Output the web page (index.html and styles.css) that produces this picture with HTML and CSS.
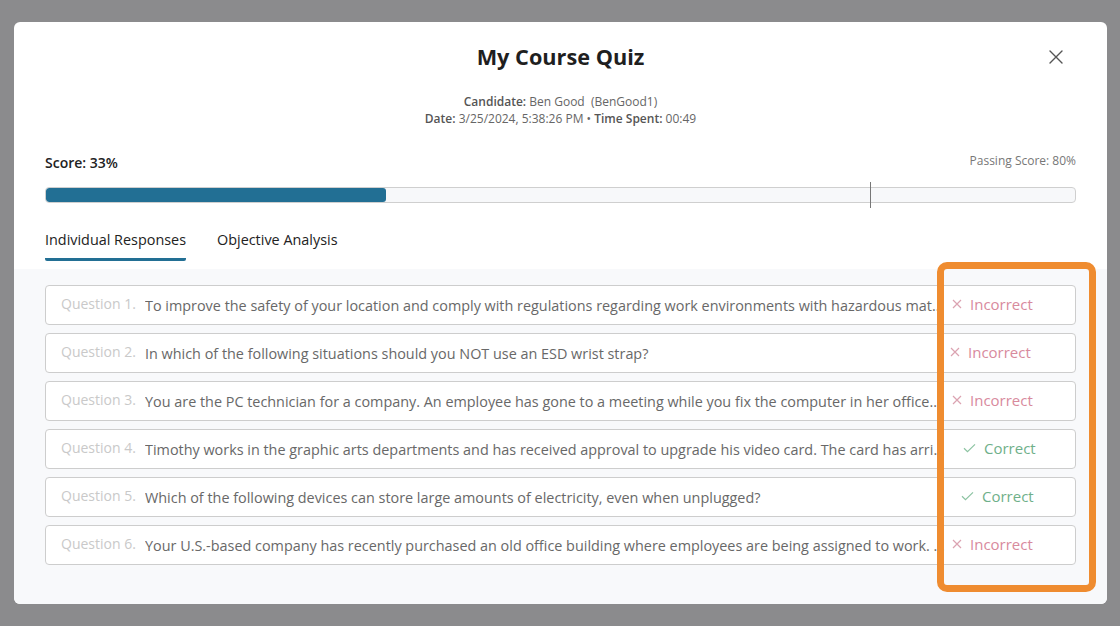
FILE: index.html
```html
<!DOCTYPE html>
<html>
<head>
<meta charset="utf-8">
<link rel="stylesheet" href="styles.css">
</head>
<body>
<div class="modal">
  <header class="head">
    <h1 class="title">My Course Quiz</h1>
    <button class="close" aria-label="Close">
      <svg width="16" height="16" viewBox="0 0 16 16"><path d="M2 2L14 14M14 2L2 14" stroke="#555" stroke-width="1.4" fill="none" stroke-linecap="round"/></svg>
    </button>
  </header>
  <div class="meta">
    <div><b>Candidate:</b> Ben Good&nbsp; (BenGood1)</div>
    <div><b>Date:</b> 3/25/2024, 5:38:26 PM • <b>Time Spent:</b> 00:49</div>
  </div>
  <div class="score-row">
    <div class="score">Score: 33%</div>
    <div class="passing">Passing Score: 80%</div>
  </div>
  <div class="bar-wrap">
    <div class="bar"><div class="fill" style="width:33%"></div></div>
    <div class="marker" style="left:80%"></div>
  </div>
  <nav class="tabs">
    <div class="tab active">Individual Responses</div>
    <div class="tab">Objective Analysis</div>
  </nav>
  <section class="list">
    <div class="row"><span class="qn">Question 1.</span><span class="qt">To improve the safety of your location and comply with regulations regarding work environments with hazardous materials, you have been asked to</span><span class="st bad"><span class="ic"><svg width="10" height="10" viewBox="0 0 10 10"><path d="M1 1L9 9M9 1L1 9" stroke="#dba3b1" stroke-width="1.2" fill="none"/></svg></span>Incorrect</span></div>
    <div class="row"><span class="qn">Question 2.</span><span class="qt">In which of the following situations should you NOT use an ESD wrist strap?</span><span class="st bad s2"><span class="ic"><svg width="10" height="10" viewBox="0 0 10 10"><path d="M1 1L9 9M9 1L1 9" stroke="#dba3b1" stroke-width="1.2" fill="none"/></svg></span>Incorrect</span></div>
    <div class="row"><span class="qn">Question 3.</span><span class="qt">You are the PC technician for a company. An employee has gone to a meeting while you fix the computer in her office. She left</span><span class="st bad"><span class="ic"><svg width="10" height="10" viewBox="0 0 10 10"><path d="M1 1L9 9M9 1L1 9" stroke="#dba3b1" stroke-width="1.2" fill="none"/></svg></span>Incorrect</span></div>
    <div class="row"><span class="qn">Question 4.</span><span class="qt">Timothy works in the graphic arts departments and has received approval to upgrade his video card. The card has arrived</span><span class="st good"><span class="ic"><svg width="13" height="10" viewBox="0 0 13 10"><path d="M1 5.2L4.5 8.6L12 1.4" stroke="#8cc3a2" stroke-width="1.2" fill="none"/></svg></span>Correct</span></div>
    <div class="row"><span class="qn">Question 5.</span><span class="qt">Which of the following devices can store large amounts of electricity, even when unplugged?</span><span class="st good s5"><span class="ic"><svg width="13" height="10" viewBox="0 0 13 10"><path d="M1 5.2L4.5 8.6L12 1.4" stroke="#8cc3a2" stroke-width="1.2" fill="none"/></svg></span>Correct</span></div>
    <div class="row"><span class="qn">Question 6.</span><span class="qt">Your U.S.-based company has recently purchased an old office building where employees are being assigned to work. During a walk</span><span class="st bad"><span class="ic"><svg width="10" height="10" viewBox="0 0 10 10"><path d="M1 1L9 9M9 1L1 9" stroke="#dba3b1" stroke-width="1.2" fill="none"/></svg></span>Incorrect</span></div>
    <div class="highlight"></div>
  </section>
</div>
</body>
</html>
```

FILE: styles.css
```css
* { box-sizing: border-box; }
html, body { margin: 0; padding: 0; }
body {
  width: 1120px;
  height: 626px;
  background: #8b8b8d;
  font-family: "Open Sans", "Noto Sans", sans-serif;
  overflow: hidden;
  padding: 22px 13px 0 14px;
}
.modal {
  width: 1093px;
  height: 582px;
  background: #fff;
  border-radius: 6px;
  overflow: hidden;
  display: flex;
  flex-direction: column;
}
.head {
  position: relative;
  display: flex;
  justify-content: center;
  padding-top: 20px;
}
.title {
  margin: 0;
  font-size: 21.7px;
  font-weight: 700;
  color: #1f1f1f;
  line-height: 30px;
}
.close {
  position: absolute;
  right: 43px;
  top: 27px;
  border: 0;
  background: none;
  padding: 0;
  width: 16px;
  height: 16px;
}
.close svg { display: block; }
.meta {
  margin-top: 21px;
  text-align: center;
  font-size: 12px;
  line-height: 17px;
  color: #666;
}
.meta b { font-weight: 600; color: #555; }
.score-row {
  display: flex;
  justify-content: space-between;
  align-items: flex-start;
  padding: 25px 31px 0 31px;
}
.score {
  font-size: 14px;
  font-weight: 600;
  color: #222;
  margin-top: 1px;
  line-height: 19px;
}
.passing {
  font-size: 12px;
  color: #777;
  line-height: 17px;
}
.bar-wrap {
  position: relative;
  margin: 10px 31px 0 31px;
  padding: 5px 0;
}
.bar {
  height: 16px;
  border: 1px solid #cfcfcf;
  border-radius: 4px;
  background: #f7f8fa;
  overflow: hidden;
}
.fill {
  height: 100%;
  background: #226f94;
  border-radius: 3px;
}
.marker {
  position: absolute;
  top: 0;
  bottom: 0;
  width: 1px;
  background: #777;
}
.tabs {
  display: flex;
  gap: 31px;
  padding: 22px 31px 0 31px;
}
.tab {
  font-size: 14.4px;
  color: #222;
  line-height: 20px;
  padding-bottom: 8px;
  border-bottom: 3px solid transparent;
}
.tab.active {
  border-bottom-color: #226f94;
  border-radius: 0 0 2px 2px;
}
.list {
  position: relative;
  flex: 1;
  margin-top: 8px;
  background: #f8f9fb;
  padding: 16px 31px 0 31px;
  display: flex;
  flex-direction: column;
  gap: 8px;
}
.row {
  height: 40px;
  background: #fff;
  border: 1px solid #cdcdcd;
  border-radius: 4px;
  display: flex;
  align-items: center;
  padding-left: 15px;
}
.qn {
  font-size: 14px;
  color: #c9c9c9;
  flex: none;
  width: 84px;
  margin-top: -3px;
}
.qt {
  font-size: 14.4px;
  color: #686868;
  flex: 1;
  min-width: 0;
  white-space: nowrap;
  overflow: hidden;
  text-overflow: ellipsis;
  margin-top: 1px;
}
.st {
  flex: none;
  width: 127px;
  padding-left: 4px;
  font-size: 15px;
  display: flex;
  align-items: center;
  margin-top: -2px;
}
.st .ic { margin-right: 8px; display: inline-flex; align-items: center; }
.bad { color: #d88a9d; }
.good { color: #6fb08a; padding-left: 15px; }
.good .ic { margin-right: 8px; }
.s2 { padding-left: 2px; }
.s5 { padding-left: 13px; }
.highlight {
  position: absolute;
  left: 923px;
  top: -7px;
  width: 159px;
  height: 330px;
  border: 7px solid #ef8c30;
  border-radius: 10px;
  pointer-events: none;
}
```
